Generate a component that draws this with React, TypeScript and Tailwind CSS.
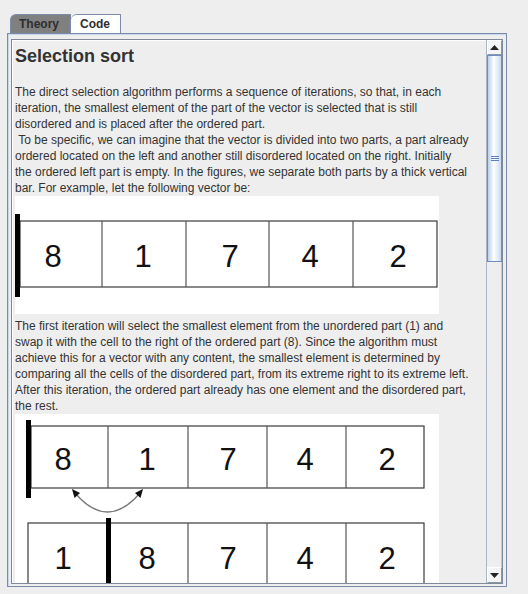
import React from 'react'

const font = "font-['Liberation_Sans',Arial,sans-serif]"

function Row({ x, y, w, h, cells }: { x: number; y: number; w: number; h: number; cells: number[] }) {
  return (
    <g>
      <rect x={x} y={y} width={w} height={h} fill="white" stroke="#3a3a3a" strokeWidth="1.2" />
      {cells.map((cx) => (
        <line key={cx} x1={cx} y1={y} x2={cx} y2={y + h} stroke="#555" strokeWidth="1.2" />
      ))}
    </g>
  )
}

function Digits({ xs, labels, baseline }: { xs: number[]; labels: string[]; baseline: number }) {
  return (
    <>
      {labels.map((l, i) => (
        <text key={i} x={xs[i]} y={baseline} textAnchor="middle" fontSize="31" fill="#111" fontFamily="Liberation Sans, Arial, sans-serif">
          {l}
        </text>
      ))}
    </>
  )
}

function FirstVector() {
  return (
    <svg width="424" height="118" className="block bg-white">
      <Row x={5} y={25} w={417} h={66} cells={[87, 171, 254, 338]} />
      <rect x="0" y="18" width="5" height="83" fill="#000" />
      <Digits xs={[38, 128, 215, 295, 383]} labels={['8', '1', '7', '4', '2']} baseline={71} />
    </svg>
  )
}

function SwapVector() {
  return (
    <svg width="424" height="190" className="block bg-white">
      <Row x={16} y={12} w={393} h={62} cells={[93, 173, 252, 331]} />
      <rect x="11" y="6" width="5" height="78" fill="#000" />
      <Digits xs={[48, 132, 213, 290, 372]} labels={['8', '1', '7', '4', '2']} baseline={56} />
      <path d="M60 79 Q92.5 117 125 79" fill="none" stroke="#777" strokeWidth="1.3" />
      <polygon points="57,75 65,79 59.5,84" fill="#111" />
      <polygon points="128,75 120,79 125.5,84" fill="#111" />
      <Row x={13} y={109} w={396} h={63} cells={[173, 252, 331]} />
      <rect x="91" y="104" width="5" height="90" fill="#000" />
      <Digits xs={[48, 132, 213, 290, 372]} labels={['1', '8', '7', '4', '2']} baseline={155} />
    </svg>
  )
}

function ScrollBar() {
  return (
    <div className="w-[16px] h-full flex flex-col bg-[#eeeeee] border-l border-[#a9b6c8]">
      <div className="h-[15px] bg-[#f4f4f4] border border-[#8b97a8] border-t-white border-l-white flex items-center justify-center">
        <svg width="9" height="5"><polygon points="0,5 4.5,0 9,5" fill="#222" /></svg>
      </div>
      <div className="h-[207px] border border-[#6d8cc7] bg-[linear-gradient(90deg,#b9cfea,#ffffff_45%,#c9dbef)] flex items-center justify-center">
        <div className="flex flex-col gap-[1px]">
          <div className="w-[8px] h-[1px] bg-[#5f7fbf]" />
          <div className="w-[8px] h-[1px] bg-[#5f7fbf]" />
          <div className="w-[8px] h-[1px] bg-[#5f7fbf]" />
        </div>
      </div>
      <div className="flex-1 border-r border-[#c8c8c8]" />
      <div className="h-[16px] bg-[#f4f4f4] border border-[#8b97a8] border-t-white border-l-white flex items-center justify-center">
        <svg width="9" height="5"><polygon points="0,0 4.5,5 9,0" fill="#222" /></svg>
      </div>
    </div>
  )
}

export default function App() {
  return (
    <div className={`w-[528px] h-[594px] bg-[#eeeeee] pl-[7px] pt-[14px] ${font} text-[#333333]`}>
      <div className="flex h-[19px] pl-[3px] items-end">
        <div className="w-[61px] h-[19px] bg-[#808080] border border-b-0 border-[#7b8cab] rounded-tl-[6px] pl-[8px] text-[12px] font-bold leading-[18px] text-[#2e2e2e]">
          Theory
        </div>
        <div className="w-[50px] h-[19px] bg-white border border-l-0 border-b-0 border-[#7b8cab] rounded-tl-[6px] pl-[9px] text-[12px] font-bold leading-[18px] text-[#2e2e2e]">
          Code
        </div>
      </div>
      <div className="w-[500px] h-[554px] border border-[#7b8cab] shadow-[inset_1px_1px_0_#c4d7ec] pl-[3px] pr-[3px] pt-[5px] pb-[2px]">
        <div className="w-full h-full border border-[#7f8a98] flex">
          <div className="flex-1 h-full border-l border-t border-white overflow-hidden pl-[2px] pt-[4px]">
            <h2 className="text-[18px] font-bold leading-[22px] text-[#333]">Selection sort</h2>
            <p className="mt-[17px] text-[12px] leading-[16px] whitespace-nowrap">
              The direct selection algorithm performs a sequence of iterations, so that, in each<br />
              iteration, the smallest element of the part of the vector is selected that is still<br />
              disordered and is placed after the ordered part.<br />
              &nbsp;To be specific, we can imagine that the vector is divided into two parts, a part already<br />
              ordered located on the left and another still disordered located on the right. Initially<br />
              the ordered left part is empty. In the figures, we separate both parts by a thick vertical<br />
              bar. For example, let the following vector be:
            </p>
            <FirstVector />
            <p className="mt-[4px] text-[12px] leading-[16px] whitespace-nowrap">
              The first iteration will select the smallest element from the unordered part (1) and<br />
              swap it with the cell to the right of the ordered part (8). Since the algorithm must<br />
              achieve this for a vector with any content, the smallest element is determined by<br />
              comparing all the cells of the disordered part, from its extreme right to its extreme left.<br />
              After this iteration, the ordered part already has one element and the disordered part,<br />
              the rest.
            </p>
            <SwapVector />
          </div>
          <ScrollBar />
        </div>
      </div>
    </div>
  )
}
